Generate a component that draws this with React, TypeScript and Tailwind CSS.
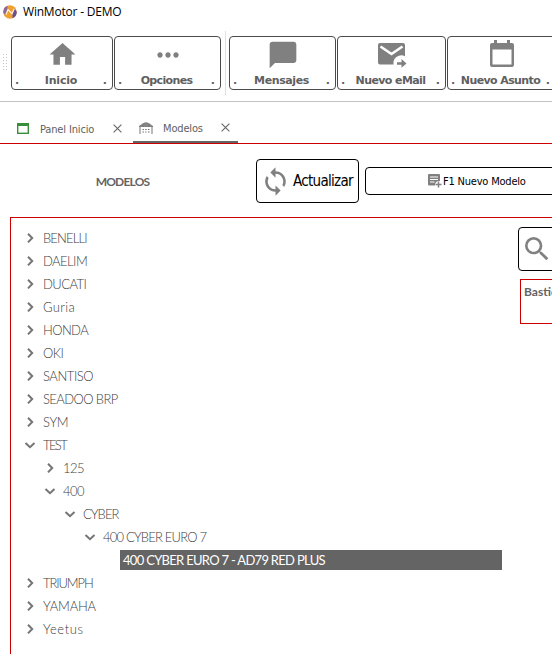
import React from 'react';
import { MdHome, MdMoreHoriz, MdChatBubble, MdSearch, MdSync } from 'react-icons/md';

const tahoma = "font-['DejaVu_Sans_Condensed','DejaVu_Sans',sans-serif]";
const gothic = "font-['Lato',sans-serif]";

type ToolProps = { label: string; width: string; tracking: string; children: React.ReactNode };

function ToolButton({ label, width, tracking, children }: ToolProps) {
  return (
    <button
      className={`${width} flex h-[54px] shrink-0 flex-col items-center rounded-[4px] border border-[#4b4b4b] bg-white text-[#606060]`}
    >
      <span className="flex h-[37px] w-full items-center justify-center text-[#808080]">{children}</span>
      <span
        className={`flex w-full justify-between pr-[5px] pl-[3px] font-['DejaVu_Sans',sans-serif] text-[11px] leading-[17px] font-bold whitespace-nowrap`}
      >
        <span>.</span>
        <span className={tracking}>{label}</span>
        <span>.</span>
      </span>
    </button>
  );
}

function MailForward() {
  return (
    <svg width="30" height="26" viewBox="0 0 30 26" fill="currentColor">
      <path d="M3 1h23a2 2 0 0 1 2 2v11.200a8 8 0 0 0-11.500 8.300H3a2 2 0 0 1-2-2V3a2 2 0 0 1 2-2z" />
      <path d="M3.500 4.500l11 7.500 11-7.500" fill="none" stroke="white" strokeWidth="2.600" />
      <path d="M20 20.200h4.500V17l5 4.600-5 4.200v-3H20z" />
    </svg>
  );
}

function Calendar() {
  return (
    <svg width="24" height="27" viewBox="0 0 24 27" fill="currentColor" className="mb-[3px] ml-[1px]">
      <path d="M4 0h3v3h10V0h3v3h2a2 2 0 0 1 2 2v20a2 2 0 0 1-2 2H2a2 2 0 0 1-2-2V5a2 2 0 0 1 2-2h2z" />
      <path d="M2.500 9.500h19v15h-19z" fill="white" />
    </svg>
  );
}

function CloseMark() {
  return (
    <svg width="9" height="9" viewBox="0 0 9 9" fill="none" stroke="#666" strokeWidth="1.1" className="shrink-0">
      <path d="M.6.6l7.800 7.800M8.400.6L.6 8.400" />
    </svg>
  );
}

type Node = { name: string; level: number; open?: boolean; selected?: boolean; tracking: string };

const nodes: Node[] = [
  { name: 'BENELLI', level: 0, tracking: 'tracking-[-0.85px]' },
  { name: 'DAELIM', level: 0, tracking: 'tracking-[-0.55px]' },
  { name: 'DUCATI', level: 0, tracking: 'tracking-[-0.55px]' },
  { name: 'Guria', level: 0, tracking: 'tracking-[0.35px]' },
  { name: 'HONDA', level: 0, tracking: 'tracking-[-0.6px]' },
  { name: 'OKI', level: 0, tracking: 'tracking-[-0.5px]' },
  { name: 'SANTISO', level: 0, tracking: 'tracking-[-0.45px]' },
  { name: 'SEADOO BRP', level: 0, tracking: 'tracking-[-0.6px]' },
  { name: 'SYM', level: 0, tracking: 'tracking-[-0.4px]' },
  { name: 'TEST', level: 0, open: true, tracking: 'tracking-[-1.6px]' },
  { name: '125', level: 1, tracking: 'tracking-[-0.5px]' },
  { name: '400', level: 1, open: true, tracking: 'tracking-[-0.5px]' },
  { name: 'CYBER', level: 2, open: true, tracking: 'tracking-[-0.95px]' },
  { name: '400 CYBER EURO 7', level: 3, open: true, tracking: 'tracking-[-0.8px]' },
  { name: '400 CYBER EURO 7 - AD79 RED PLUS', level: 4, selected: true, tracking: 'tracking-[-0.7px]' },
  { name: 'TRIUMPH', level: 0, tracking: 'tracking-[-1.1px]' },
  { name: 'YAMAHA', level: 0, tracking: 'tracking-[-0.2px]' },
  { name: 'Yeetus', level: 0, tracking: 'tracking-[0.6px]' },
];

const indents = ['pl-[13px]', 'pl-[33px]', 'pl-[53px]', 'pl-[73px]', 'pl-[109px]'];

function TreeRow({ node }: { node: Node }) {
  return (
    <li className={`${indents[node.level]} flex h-[23px] items-center`}>
      {node.selected ? (
        <span className={`${node.tracking} h-5 w-[382px] bg-[#646464] pl-[3px] leading-5 font-normal text-white`}>{node.name}</span>
      ) : (
        <>
          <svg width="12" height="12" viewBox="0 0 12 12" fill="none" stroke="#757575" strokeWidth="2">
            <path d={node.open ? 'M1.5 4l4.5 4.2L10.5 4' : 'M4 1.8L8.2 6L4 10.4'} />
          </svg>
          <span className={`${node.tracking} pt-px pl-[7px] leading-5`}>{node.name}</span>
        </>
      )}
    </li>
  );
}

export default function App() {
  return (
    <div className="flex h-[654px] w-[552px] flex-col overflow-hidden bg-white">
      <header className="flex h-[25px] shrink-0 items-center pb-px pl-[3px]">
        <svg width="14" height="14" viewBox="0 0 14 14">
          <circle cx="7" cy="7" r="6.7" fill="#f0a02c" />
          <path d="M.3 7.500A6.700 6.700 0 0 1 4.500.8L4.600 4.500L2.500 10.500z" fill="#8a6a9c" />
          <path d="M13.700 6.500A6.700 6.700 0 0 1 9.500 13.200L9.400 9.500L11.500 3.500z" fill="#6b4f93" />
          <path d="M2.800 9.800L5 4.500l4 4.200 2.300-5" fill="none" stroke="#fff3df" strokeWidth="1.200" />
        </svg>
        <h1 className="pl-[6px] font-['Open_Sans',sans-serif] text-[12px] leading-4 tracking-[-0.2px] text-black">WinMotor - DEMO</h1>
      </header>

      <nav className="flex h-[77px] shrink-0 border-b border-[#c3c3c3] pt-[11px]">
        <svg className="mt-[18px] mr-[4px] ml-[3px] shrink-0" width="4" height="17" fill="#c4c4c4">
          {[0, 3, 6, 9, 12, 15].map((y) => (
            <g key={y}>
              <rect x="0" y={y} width="1" height="1" />
              <rect x="3" y={y} width="1" height="1" />
            </g>
          ))}
        </svg>
        <div className="flex gap-px">
          <ToolButton label="Inicio" width="w-[102px]" tracking="tracking-[-0.2px]">
            <MdHome size={31} />
          </ToolButton>
          <ToolButton label="Opciones" width="w-[107px]" tracking="tracking-[-0.65px]">
            <MdMoreHoriz size={32} />
          </ToolButton>
        </div>
        <div className="-mt-[5px] mr-[3px] ml-[4px] h-16 w-px shrink-0 bg-[#e0e0e0]" />
        <div className="flex gap-px">
          <ToolButton label="Mensajes" width="w-[107px]" tracking="tracking-[-0.4px]">
            <MdChatBubble size={32} />
          </ToolButton>
          <ToolButton label="Nuevo eMail" width="w-[109px]" tracking="tracking-[-0.6px]">
            <MailForward />
          </ToolButton>
          <ToolButton label="Nuevo Asunto" width="w-[109px]" tracking="tracking-[-0.6px]">
            <Calendar />
          </ToolButton>
        </div>
      </nav>

      <div className={`${tahoma} flex h-[42px] shrink-0 items-end border-b border-[#cc0000] text-[11px] text-[#606060]`}>
        <div className="flex h-[29px] items-center pl-[17px]">
          <svg width="12" height="11" viewBox="0 0 12 11" fill="none" stroke="#388e3c" strokeWidth="1.4">
            <rect x=".7" y=".7" width="10.6" height="9.6" />
            <path d="M0 1.500h12" strokeWidth="3" />
          </svg>
          <span className="w-[84px] shrink-0 pt-[3px] pl-[11px] tracking-[-0.15px] whitespace-nowrap">Panel Inicio</span>
          <CloseMark />
        </div>
        <div className="ml-[11px] flex h-[29px] w-[105px] shrink-0 items-center border-b-2 border-[#646464] pl-[6px]">
          <svg width="14" height="12" viewBox="0 0 14 12" fill="none" stroke="#757575" className="shrink-0">
            <path d="M0 4L4 1.200Q7-.8 10 1.200L14 4V5H0z" fill="#858585" stroke="none" />
            <path d="M1 4v8M13 4v8M4 5V2.500M10 5V2.500" />
            <path d="M3.500 7.500h7M3.500 10h4M9 10h1.500" strokeDasharray="1.500 1.200" />
          </svg>
          <span className="w-[68px] shrink-0 pt-[4px] pl-[10px] tracking-[-0.15px]">Modelos</span>
          <CloseMark />
        </div>
      </div>

      <section className="flex h-[73px] shrink-0 items-center pt-[1px]">
        <h2 className={`${gothic} w-[245px] shrink-0 pt-[2px] text-center text-[12px] font-bold tracking-[-0.8px] text-[#646464]`}>MODELOS</h2>
        <button
          className={`${tahoma} ml-[11px] flex h-[44px] w-[103px] shrink-0 items-center rounded-[4px] border border-black pl-[3px] text-[15px] tracking-[-0.7px]`}
        >
          <MdSync size={31} className="shrink-0 text-[#808080]" />
          <span className="pt-px pl-[2px]">Actualizar</span>
        </button>
        <button
          className={`${tahoma} ml-[6px] flex h-[28px] w-[226px] shrink-0 items-center rounded-[4px] border border-black pl-[62px] text-[11px] tracking-[-0.2px] whitespace-nowrap`}
        >
          <svg width="14" height="14" viewBox="0 0 14 14" fill="#808080">
            <path d="M1 0h10a1 1 0 0 1 1 1v6h-1.500A4 4 0 0 0 7 11.500H1a1 1 0 0 1-1-1V1a1 1 0 0 1 1-1z" />
            <path d="M2 3h8M2 5.500h8M2 8h4.500" stroke="white" />
            <path d="M10.500 7.500v6M7.500 10.500h6" stroke="#808080" strokeWidth="1.500" />
          </svg>
          <span className="pt-[3px] pl-px">F1 Nuevo Modelo</span>
        </button>
      </section>

      <main className="ml-[10px] flex w-[560px] flex-1 border-t border-l border-[#cc0000]">
        <ul className={`${gothic} w-[507px] shrink-0 pt-[8px] text-[13px] font-light whitespace-nowrap text-[#404040]`}>
          {nodes.map((node) => (
            <TreeRow key={node.name} node={node} />
          ))}
        </ul>
        <aside className="pt-[9px]">
          <button className="flex h-[44px] w-[44px] items-center rounded-[4px] border border-black pl-[2px] text-[#808080]">
            <MdSearch size={32} className="shrink-0" />
          </button>
          <div className={`${gothic} mt-2 ml-[2px] h-[45px] w-20 border border-[#cc0000] pt-[4px] pl-[3px] text-[12px] leading-4 font-bold text-[#646464]`}>
            Bastidor
          </div>
        </aside>
      </main>
    </div>
  );
}
